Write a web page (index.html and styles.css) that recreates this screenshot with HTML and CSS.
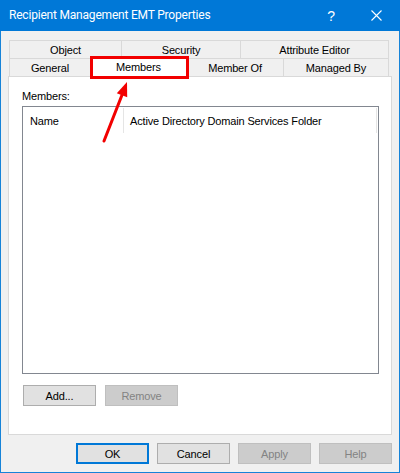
FILE: index.html
```html
<!DOCTYPE html>
<html>
<head>
<meta charset="utf-8">
<link rel="stylesheet" href="styles.css">
</head>
<body>
<div class="window">
  <div class="titlebar">
    <span class="title">Recipient Management EMT Properties</span>
    <span class="help">?</span>
    <span class="close">
      <svg width="11" height="11" viewBox="0 0 11 11"><path d="M0.5 0.5 L10.5 10.5 M10.5 0.5 L0.5 10.5" stroke="#fff" stroke-width="1.1" fill="none"/></svg>
    </span>
  </div>
  <div class="body">
    <div class="tabs">
      <div class="tabrow">
        <div class="tab w-object">Object</div>
        <div class="tab w-security">Security</div>
        <div class="tab w-attr">Attribute Editor</div>
      </div>
      <div class="tabrow">
        <div class="tab w-general">General</div>
        <div class="tab w-members selected">Members</div>
        <div class="tab w-memberof">Member Of</div>
        <div class="tab w-managed">Managed By</div>
      </div>
    </div>
    <div class="panel">
      <div class="label">Members:</div>
      <div class="list">
        <div class="list-header">
          <div class="col col-name">Name</div>
          <div class="col col-folder">Active Directory Domain Services Folder</div>
        </div>
      </div>
      <div class="panel-buttons">
        <div class="btn">Add...</div>
        <div class="btn disabled">Remove</div>
      </div>
    </div>
    <div class="dialog-buttons">
      <div class="btn default">OK</div>
      <div class="btn">Cancel</div>
      <div class="btn disabled">Apply</div>
      <div class="btn disabled">Help</div>
    </div>
  </div>
  <div class="annot-box"></div>
  <svg class="annot-arrow" width="400" height="473" viewBox="0 0 400 473">
    <line x1="104" y1="141" x2="122" y2="95" stroke="#f20000" stroke-width="3" stroke-linecap="round"/>
    <polygon points="127,82 127.2,97.2 116.8,93.2" fill="#f20000"/>
  </svg>
</div>
</body>
</html>
```

FILE: styles.css
```css
* { box-sizing: border-box; }
html, body { margin: 0; padding: 0; }
body {
  font-family: "Liberation Sans", Arial, sans-serif;
  font-size: 11px;
  letter-spacing: -0.15px;
  color: #000;
  background: #f0f0f0;
}
.window {
  position: relative;
  width: 400px;
  height: 473px;
  background: #f0f0f0;
  border-left: 1px solid #1683d8;
  border-right: 1px solid #1683d8;
  border-bottom: 1px solid #1683d8;
  display: flex;
  flex-direction: column;
}
.titlebar {
  height: 31px;
  margin: 0 -1px;
  background: #0078d7;
  color: #fff;
  display: flex;
  align-items: center;
  padding-left: 9px;
  font-family: Roboto, "Liberation Sans", sans-serif;
  font-size: 12px;
  letter-spacing: -0.2px;
}
.title { flex: 1; padding-bottom: 1px; }
.help {
  width: 46px;
  text-align: center;
  font-family: "Liberation Sans", sans-serif;
  font-size: 14px;
}
.close {
  width: 46px;
  display: flex;
  justify-content: center;
  padding-right: 2px;
}
.close svg { display: block; }
.body {
  padding: 9px 7px 0 7px;
  display: flex;
  flex-direction: column;
}
.tabs {
  position: relative;
  z-index: 2;
  padding-left: 1px;
}
.tabrow {
  display: flex;
  height: 18px;
}
.tab {
  height: 18px;
  border: 1px solid #d9d9d9;
  border-bottom: none;
  margin-left: -1px;
  display: flex;
  align-items: center;
  justify-content: center;
  background: #f0f0f0;
  padding-top: 1px;
}
.tabrow .tab:first-child { margin-left: 0; }
.w-object { width: 113px; }
.w-security { width: 120px; }
.w-attr { width: 149px; }
.w-general { width: 82px; }
.w-members { width: 97px; }
.w-memberof { width: 98px; }
.w-managed { width: 106px; }
.tab.selected {
  background: #fff;
  height: 21px;
  margin-top: -2px;
  padding-top: 0;
  padding-bottom: 1px;
  border-color: #d9d9d9;
}
.panel {
  position: relative;
  z-index: 1;
  width: 384px;
  height: 359px;
  background: #fff;
  border: 1px solid #d9d9d9;
  padding: 13px 0 0 13px;
  display: flex;
  flex-direction: column;
}
.label {
  height: 13px;
  line-height: 13px;
}
.list {
  margin-top: 3px;
  width: 357px;
  height: 268px;
  border: 1px solid #828790;
  background: #fff;
}
.list-header {
  display: flex;
  height: 25px;
  margin-top: 1px;
}
.col {
  display: flex;
  align-items: center;
  border-right: 1px solid #e5e5e5;
}
.col-name { width: 101px; padding-left: 7px; }
.col-folder { width: 253px; padding-left: 6px; }
.panel-buttons {
  display: flex;
  gap: 9px;
  margin-top: 11px;
  padding-left: 1px;
}
.btn {
  width: 73px;
  height: 21px;
  background: #e1e1e1;
  border: 1px solid #adadad;
  display: flex;
  align-items: center;
  justify-content: center;
}
.btn.disabled {
  background: #cccccc;
  border-color: #bfbfbf;
  color: #838383;
}
.btn.default {
  border: 2px solid #0078d7;
}
.dialog-buttons {
  display: flex;
  justify-content: flex-end;
  gap: 8px;
  margin-top: 8px;
}
.annot-box {
  position: absolute;
  left: 89px;
  top: 56px;
  width: 99px;
  height: 23px;
  border: 3px solid #f20000;
  z-index: 5;
}
.annot-arrow {
  position: absolute;
  left: -1px;
  top: 0;
  z-index: 6;
  pointer-events: none;
}
```
